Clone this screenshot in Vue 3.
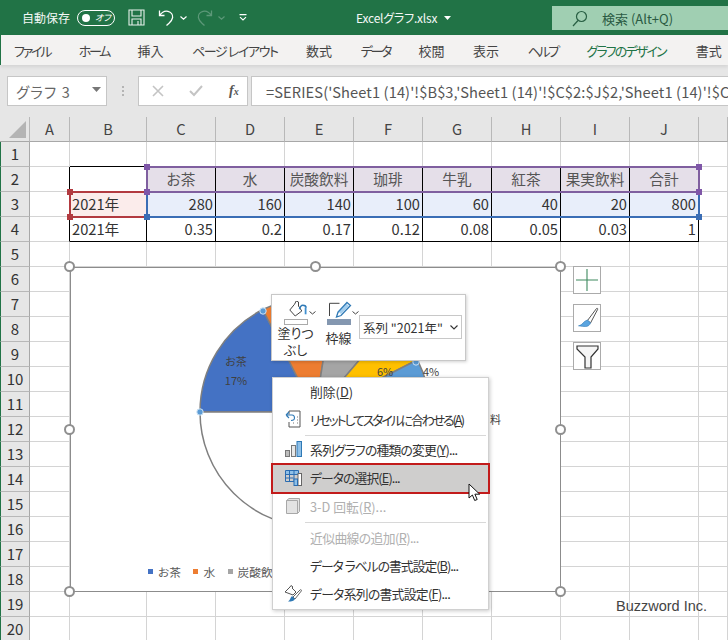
<script setup>
const columns = ['A', 'B', 'C', 'D', 'E', 'F', 'G', 'H', 'I', 'J', '']
const content = {
  2: ['', '', 'お茶', '水', '炭酸飲料', '珈琲', '牛乳', '紅茶', '果実飲料', '合計', ''],
  3: ['', '2021年', '280', '160', '140', '100', '60', '40', '20', '800', ''],
  4: ['', '2021年', '0.35', '0.2', '0.17', '0.12', '0.08', '0.05', '0.03', '1', '']
}
function cellClass(r, c) {
  const inTable = (row, col) => row >= 2 && row <= 4 && col >= 1 && col <= 9
  const list = []
  if (inTable(r, c) || inTable(r, c + 1)) list.push('black-right')
  if (inTable(r, c) || inTable(r + 1, c)) list.push('black-bottom')
  if (r === 2 && c >= 2 && c <= 9) list.push('fill-purple', 'center')
  if (r === 3 && c === 1) list.push('fill-red')
  if (r === 3 && c >= 2 && c <= 9) list.push('fill-blue')
  if ((r === 3 || r === 4) && c >= 2) list.push('right')
  return list
}
const rows = Array.from({ length: 20 }, (_, i) => {
  const r = i + 1
  return {
    r,
    cells: columns.map((_, c) => ({
      key: c,
      text: content[r] ? content[r][c] : '',
      cls: cellClass(r, c)
    }))
  }
})
const tabs = [
  ['ファイル', 'k4'], ['ホーム', 'k2'], ['挿入', ''], ['ページ レイアウト', 'k1'], ['数式', ''],
  ['データ', 'k2'], ['校閲', ''], ['表示', ''], ['ヘルプ', 'k2'], ['グラフのデザイン', 'k3 active'], ['書式', 'last']
]

const cx = 315, cy = 412, rad = 115
const sliceData = [
  [280, '#4472c4'], [160, '#ed7d31'], [140, '#a5a5a5'], [100, '#ffc000'],
  [60, '#5b9bd5'], [40, '#70ad47'], [20, '#264478'], [800, 'none']
]
function pt(deg) {
  const a = (deg * Math.PI) / 180
  return `${(cx - 70 + rad * Math.sin(a)).toFixed(2)} ${(cy - 267 - rad * Math.cos(a)).toFixed(2)}`
}
let start = 270
const slices = sliceData.map(([v, fill]) => {
  const sweep = (v / 800) * 180
  const end = start + sweep
  const d = `M${cx - 70} ${cy - 267} L${pt(start)} A${rad} ${rad} 0 0 1 ${pt(end)} Z`
  start = end
  return { d, fill }
})
const handles = [
  ['0%', '0%'], ['50%', '0%'], ['100%', '0%'], ['0%', '50%'],
  ['100%', '50%'], ['0%', '100%'], ['50%', '100%'], ['100%', '100%']
]
</script>

<template>
  <div class="app">
    <header class="titlebar">
      <span class="autosave">自動保存</span>
      <span class="toggle"><i class="dot"></i><b>オフ</b></span>
      <svg class="qat save" width="17" height="17" viewBox="0 0 17 17" fill="none" stroke="#e8f1ec" stroke-width="1.1">
        <path d="M1 1h15v15H1zM4 1v6h9V1M4 16v-6h9v6M10 12v4" />
      </svg>
      <svg class="qat undo" width="17" height="17" viewBox="0 0 17 17" fill="none" stroke="#fff" stroke-width="1.3">
        <path d="M1.5 1.5v5h5M1.5 6.5C4 3 7 1.5 10 2.3c3 .8 5 3.4 4.6 6.3-.3 2.3-2 4-3.6 5.6L8.5 16.5" />
      </svg>
      <svg class="chev" width="7" height="4" viewBox="0 0 7 4" fill="none" stroke="#fff" stroke-width="1.2"><path d="M.5.5l3 2.6 3-2.6" /></svg>
      <svg class="qat redo" width="17" height="17" viewBox="0 0 17 17" fill="none" stroke="#5c9878" stroke-width="1.3">
        <path d="M15.5 1.5v5h-5M15.5 6.5C13 3 10 1.5 7 2.3c-3 .8-5 3.4-4.6 6.3.3 2.3 2 4 3.6 5.6l2.5 2.3" />
      </svg>
      <svg class="chev dim" width="7" height="4" viewBox="0 0 7 4" fill="none" stroke="#5c9878" stroke-width="1.2"><path d="M.5.5l3 2.6 3-2.6" /></svg>
      <svg class="qatmore" width="8" height="7" viewBox="0 0 8 7" fill="none" stroke="#fff" stroke-width="1.1"><path d="M.5.6h7M1 3.2l3 2.8 3-2.8" /></svg>
      <span class="filename">Excelグラフ.xlsx</span>
      <svg class="filechev" width="7" height="4" viewBox="0 0 7 4" fill="#fff"><path d="M0 0h7L3.5 4z" /></svg>
      <div class="search">
        <svg width="16" height="17" viewBox="0 0 16 17" fill="none" stroke="#285f43" stroke-width="1.2">
          <circle cx="9.5" cy="6.5" r="5" /><path d="M6 10.5L1 16" />
        </svg>
        <span>検索 (Alt+Q)</span>
      </div>
    </header>

    <nav class="tabs">
      <span v-for="t in tabs" :key="t[0]" :class="t[1]">{{ t[0] }}</span>
    </nav>

    <section class="formula">
      <div class="namebox">
        <span>グラフ 3</span>
        <svg width="9" height="5" viewBox="0 0 9 5" fill="#777"><path d="M0 0h9L4.500 5z" /></svg>
      </div>
      <div class="grip"><i></i><i></i><i></i></div>
      <div class="fbuttons">
        <svg width="12" height="12" viewBox="0 0 12 12" stroke="#c4c4c4" stroke-width="1.6"><path d="M1 1l10 10M11 1L1 11" /></svg>
        <svg width="14" height="12" viewBox="0 0 14 12" fill="none" stroke="#c4c4c4" stroke-width="2"><path d="M1 6l4 4 8-9" /></svg>
        <span class="fx">f<small>x</small></span>
      </div>
      <div class="finput">=SERIES('Sheet1 (14)'!$B$3,'Sheet1 (14)'!$C$2:$J$2,'Sheet1 (14)'!$C$3</div>
    </section>

    <section class="sheet">
      <div class="grid">
        <div class="corner"><i></i></div>
        <div v-for="(c, i) in columns" :key="'h' + i" class="colhead">{{ c }}</div>
        <template v-for="row in rows" :key="row.r">
          <div class="rowhead">{{ row.r }}</div>
          <div v-for="cell in row.cells" :key="cell.key" class="cell" :class="cell.cls"><span>{{ cell.text }}</span></div>
        </template>
      </div>

      <div class="grid overlay">
        <div class="range purple"><i class="tl"></i><i class="tr"></i><i class="bl"></i><i class="br"></i></div>
        <div class="range red"><i class="tl"></i><i class="bl"></i></div>
        <div class="range blue"><i class="bl"></i><i class="br"></i></div>

        <div class="chart">
          <svg class="pie" width="490" height="324" viewBox="0 0 490 324">
            <path v-for="(s, i) in slices" :key="i" :d="s.d" :fill="s.fill === 'none' ? '#fff' : s.fill" stroke="#7f7f7f" stroke-width="1.5" />
            <text x="166" y="99" class="lbl" text-anchor="middle">お茶</text>
            <text x="166" y="118" class="lbl" text-anchor="middle">17%</text>
            <text x="315" y="109" class="lbl" text-anchor="middle">6%</text>
            <text x="361" y="109" class="lbl" text-anchor="middle">4%</text>
            <text x="431" y="157" class="lbl" text-anchor="end">料</text>
            <circle cx="193" cy="44" r="3.200" class="pt" />
            <circle cx="130" cy="145" r="3.200" class="pt" />
            <circle cx="346" cy="95" r="3.200" class="pt" />
          </svg>
          <div class="legend">
            <i class="sq sq-blue"></i><span>お茶</span>
            <i class="sq sq-orange"></i><span>水</span>
            <i class="sq sq-gray"></i><span>炭酸飲</span>
          </div>
          <div class="handles">
            <i v-for="(h, i) in handles" :key="i" class="handle" :style="{ left: h[0], top: h[1] }"></i>
          </div>
        </div>
      </div>

      <aside class="sidebtns">
        <button>
          <svg width="22" height="22" viewBox="0 0 22 22" stroke="#3f8a5f" stroke-width="1.1"><path d="M11 0v22M0 11h22" /></svg>
        </button>
        <button>
          <svg width="24" height="24" viewBox="0 0 24 24">
            <path d="M12.500 14.500L21.500 2.500c.5-.7 1.500 0 1.200.8L15.500 17z" fill="#fff" stroke="#555" stroke-width="1" />
            <path d="M12.500 14l3 2.700c-.6 2.400-2.400 3.800-4.800 3.800-2.200 0-4.700-.1-7.200-.7 2-.5 3.400-1.300 4.700-3 1-1.300 2.500-2.200 4.300-2.800z" fill="#5aa5e0" stroke="#2f79b5" stroke-width=".6" />
          </svg>
        </button>
        <button>
          <svg width="23" height="25" viewBox="0 0 23 25">
            <path d="M1 2h21v3l-7 8v11H9V13L1 5z" fill="#f5f5f5" stroke="#333" stroke-width="1.200" stroke-linejoin="miter" />
          </svg>
        </button>
      </aside>

      <div class="mini">
        <div class="mini-col fill">
          <div class="mini-icon">
            <svg width="26" height="17" viewBox="0 0 26 17" fill="none">
              <path d="M6.800 9l4.700-5.700 1.700-3.300 2.300 1v4l3.300 5-6.600 5z" fill="#fff" stroke="#444" stroke-width="1" />
              <path d="M16.500 8.300c.6-2.300 2-4 3.300-4 1.800 0 3.200 1 3.200 2.400" stroke="#2f79b5" stroke-width="1.600" />
              <path d="M22.600 6.500v6.800" stroke="#3f8fd0" stroke-width="1.800" />
            </svg>
            <svg class="mchev" width="7" height="4" viewBox="0 0 7 4" fill="none" stroke="#444" stroke-width="1"><path d="M.5.5l3 2.500 3-2.500" /></svg>
          </div>
          <i class="swatch white"></i>
          <span class="ml1">塗りつ</span>
          <span class="ml2">ぶし</span>
        </div>
        <div class="mini-col line">
          <div class="mini-icon">
            <svg width="26" height="17" viewBox="0 0 26 17" fill="none">
              <path d="M13.500 2.300H3.500V15" stroke="#444" stroke-width="1" />
              <path d="M21 1.500l3.500 3L15 14.500l-4.500 1.500 1.500-4.800z" fill="#fff" stroke="#2f79b5" stroke-width="1.300" />
              <path d="M20.500 2.800l2.600 2.300L15 13l-2.500-2.200z" fill="#5aa5e0" opacity=".55" />
            </svg>
            <svg class="mchev" width="7" height="4" viewBox="0 0 7 4" fill="none" stroke="#444" stroke-width="1"><path d="M.5.5l3 2.500 3-2.500" /></svg>
          </div>
          <i class="swatch steel"></i>
          <span class="ml3">枠線</span>
        </div>
        <div class="mini-select">
          <span>系列 "2021年"</span>
          <svg width="8" height="5" viewBox="0 0 8 5" fill="none" stroke="#333" stroke-width="1.100"><path d="M.5.5l3.500 3.500L7.500.5" /></svg>
        </div>
      </div>

      <div class="menu">
        <div class="mi"><span class="mi-i"></span><span>削除(<u>D</u>)</span></div>
        <div class="mi">
          <span class="mi-i">
            <svg width="16" height="18" viewBox="0 0 16 18" fill="none">
              <path d="M4 4.500V1h11v16H4v-5" stroke="#555" stroke-width="1" />
              <path d="M1 5l3-3M1 5l3 3M1 5h6c2 0 2.500 1.500 2.500 3S8 10.500 6 10.500" stroke="#2f79b5" stroke-width="1.100" />
              <path d="M12 7h1M12 10h1M12 13h1M8 13h1" stroke="#777" stroke-width="1" />
            </svg>
          </span>
          <span class="s-reset">リセットしてスタイルに合わせる(<u>A</u>)</span>
        </div>
        <hr class="sep" />
        <div class="mi">
          <span class="mi-i">
            <svg width="17" height="16" viewBox="0 0 17 16">
              <rect x=".5" y="9.500" width="4" height="6" fill="#bdbdbd" stroke="#777" />
              <rect x="6.500" y="4.500" width="4" height="11" fill="#e8e8e8" stroke="#777" />
              <rect x="12" y=".5" width="4.500" height="15" fill="#8ec0e8" stroke="#2f79b5" />
            </svg>
          </span>
          <span class="s-type">系列グラフの種類の変更(<u>Y</u>)...</span>
        </div>
        <div class="mi hot">
          <span class="mi-i">
            <svg width="17" height="16" viewBox="0 0 17 16" fill="none">
              <rect x="1" y="1" width="12" height="3.500" fill="#8ec0e8" />
              <path d="M.5.500h13v11H.5zM.5 4.500h13M.5 8h8M4.500.5v11M9 .5v11" stroke="#2b6cb0" stroke-width="1" />
              <rect x="13" y="3.500" width="3.500" height="12" fill="#fff" stroke="#666" />
              <rect x="9" y="9" width="3.500" height="6.500" fill="#8ec0e8" stroke="#2b6cb0" />
            </svg>
          </span>
          <span class="s-data">データの選択(<u>E</u>)...</span>
        </div>
        <div class="mi off">
          <span class="mi-i">
            <svg width="14" height="16" viewBox="0 0 14 16">
              <path d="M.5 2.500L3 .5h10.500v13l-2 2H.5z" fill="#e3e3e3" stroke="#a8a8a8" />
              <path d="M.5 2.500h11v13" fill="none" stroke="#a8a8a8" />
            </svg>
          </span>
          <span>3-D 回転(<u>R</u>)...</span>
        </div>
        <hr class="sep wide" />
        <div class="mi off"><span class="mi-i"></span><span class="s-trend">近似曲線の追加(<u>R</u>)...</span></div>
        <div class="mi"><span class="mi-i"></span><span class="s-label">データ ラベルの書式設定(<u>B</u>)...</span></div>
        <div class="mi">
          <span class="mi-i">
            <svg width="18" height="17" viewBox="0 0 18 17" fill="none">
              <path d="M1 7l5-5 1-1.500 2 1.500-1 1 4 4-3 3z" fill="#fff" stroke="#555" stroke-width="1" />
              <path d="M9 12l7-7c1-.8 2 .2 1.300 1L11 14z" fill="#fff" stroke="#555" stroke-width=".9" />
              <path d="M8 11l3 3c-1 2-3 2.500-7 2.500 2-.8 2-3.500 4-5.500z" fill="#2f79b5" />
            </svg>
          </span>
          <span class="s-series">データ系列の書式設定(<u>F</u>)...</span>
        </div>
      </div>

      <svg class="cursor" width="14" height="19" viewBox="0 0 14 19">
        <path d="M1 1v14l3.400-3 2.300 5.500 2.500-1-2.300-5.300h4.800z" fill="#fff" stroke="#111" stroke-width="1" stroke-linejoin="round" />
      </svg>

      <div class="watermark">Buzzword Inc.</div>
    </section>
  </div>
</template>

<style scoped>
.app {
  position: relative;
  width: 728px;
  height: 640px;
  overflow: hidden;
  background: #e6e6e6;
  font-family: "Noto Sans CJK JP", "Noto Sans", sans-serif;
  font-feature-settings: "palt";
  color: #333;
}
.titlebar {
  height: 35px;
  background: #217346;
  color: #fff;
  display: flex;
  align-items: center;
  padding-left: 22px;
  box-sizing: border-box;
}
.autosave { font-size: 12px; width: 49px; white-space: nowrap; color: #f4f8f6; }
.toggle {
  width: 38px;
  height: 16px;
  margin-left: 6px;
  box-sizing: border-box;
  border: 1px solid #fff;
  border-radius: 8px;
  display: flex;
  align-items: center;
  padding-left: 4px;
}
.dot { width: 8px; height: 8px; border-radius: 50%; background: #fff; }
.toggle b { font-weight: 400; font-size: 9px; margin-left: 5px; line-height: 14px; font-style: italic; }
.qat { flex: none; }
.save { margin-left: 13px; }
.undo { margin-left: 13px; }
.chev { margin-left: 5px; flex: none; }
.redo { margin-left: 9px; }
.chev.dim { margin-left: 5px; }
.qatmore { margin-left: 14px; flex: none; }
.filename { margin-left: 109px; font-size: 12px; width: 81px; white-space: nowrap; color: #f4f8f6; letter-spacing: -.2px; }
.filechev { margin-left: 7px; flex: none; }
.search {
  position: absolute;
  left: 552px;
  top: 6px;
  width: 176px;
  height: 24px;
  background: #a0cfb2;
  display: flex;
  align-items: center;
  padding-left: 20px;
  box-sizing: border-box;
  color: #2a5a42;
  font-size: 13px;
}
.search span { margin-left: 14px; white-space: nowrap; }

.tabs {
  height: 30px;
  background: #f3f2f1;
  display: flex;
  align-items: center;
  gap: 28.500px;
  padding-left: 13px;
  font-size: 13px;
  white-space: nowrap;
  color: #444;
  box-shadow: 0 2px 3px rgba(0, 0, 0, .08);
  position: relative;
  border-left: 1px solid #217346;
  box-sizing: border-box;
  overflow: hidden;
}
.tabs .k1 { letter-spacing: -1.400px; }
.tabs .k2 { letter-spacing: -2.300px; }
.tabs .k3 { letter-spacing: -1.850px; }
.tabs .k4 { letter-spacing: -2.200px; }
.tabs .last { margin-left: 1.500px; }
.tabs .active { color: #217346; }

.formula {
  height: 52px;
  background: #e6e6e6;
  display: flex;
  align-items: flex-start;
  padding: 11px 0 0 7px;
  box-sizing: border-box;
}
.namebox, .fbuttons, .finput {
  height: 30px;
  background: #fff;
  border: 1px solid #c6c6c6;
  box-sizing: border-box;
  display: flex;
  align-items: center;
}
.namebox {
  width: 100px;
  padding: 0 5px 0 8px;
  justify-content: space-between;
  font-size: 14.500px;
  color: #666;
  letter-spacing: 1.200px;
}
.namebox svg { margin-top: -4px; }
.grip { width: 31px; height: 30px; display: flex; flex-direction: column; align-items: center; justify-content: center; gap: 2px; }
.grip i { width: 2px; height: 2px; background: #b4b4b4; }
.fbuttons { width: 110px; padding-left: 13px; }
.fbuttons svg:nth-child(2) { margin-left: 25px; }
.fx { margin-left: 26px; font-family: "Liberation Serif", serif; font-style: italic; font-weight: 700; font-size: 14px; color: #555; }
.fx small { font-size: 10px; }
.finput {
  flex: 1;
  margin-left: 3px;
  padding-left: 14px;
  font-size: 14.670px;
  letter-spacing: .1px;
  white-space: nowrap;
  overflow: hidden;
  color: #555;
  font-feature-settings: normal;
  border-right: 0;
}

.sheet { position: relative; height: 523px; background: #fff; }
.grid {
  display: grid;
  grid-template-columns: 30px 40px 77px repeat(8, 69px) 29px;
  grid-template-rows: 25px;
  grid-auto-rows: 25px;
  font-size: 14.670px;
}
.corner, .colhead {
  background: #e6e6e6;
  box-sizing: border-box;
  border-bottom: 1px solid #a8a8a8;
  border-right: 1px solid #b8b8b8;
}
.corner { position: relative; }
.corner i {
  position: absolute;
  right: 3px;
  bottom: 3px;
  width: 0;
  height: 0;
  border-left: 17px solid transparent;
  border-bottom: 17px solid #b4b4b4;
}
.colhead { display: flex; align-items: center; justify-content: center; color: #444; font-size: 14.670px; padding-bottom: 2px; }
.rowhead {
  background: #e6e6e6;
  box-sizing: border-box;
  border-right: 1px solid #a8a8a8;
  border-bottom: 1px solid #b8b8b8;
  border-left: 1px solid #217346;
  display: flex;
  align-items: center;
  justify-content: center;
  font-size: 15px;
  color: #333;
  padding-bottom: 2px;
}
.cell {
  box-sizing: border-box;
  border-right: 1px solid #d4d4d4;
  border-bottom: 1px solid #d4d4d4;
  display: flex;
  align-items: center;
  padding: 0 2px 2px;
  white-space: nowrap;
  overflow: hidden;
  color: #333;
}
.black-right { border-right-color: #000; }
.black-bottom { border-bottom-color: #000; }
.center { justify-content: center; color: #555; }
.right { justify-content: flex-end; }
.fill-purple { background: #e5dfe9; }
.fill-red { background: #fbeceb; }
.fill-blue { background: #e8eefa; }

.overlay { position: absolute; inset: 0; pointer-events: none; }
.range { position: relative; box-sizing: border-box; margin: -1.500px -.5px -.5px -1.500px; }
.range i { position: absolute; width: 6px; height: 6px; }
.range .tl { left: -4px; top: -4px; }
.range .tr { right: -4px; top: -4px; }
.range .bl { left: -4px; bottom: -4px; }
.range .br { right: -4px; bottom: -4px; }
.purple { grid-column: 4 / 12; grid-row: 3; border: 2px solid #7f5f9f; z-index: 2; }
.purple i { background: #7f57a8; }
.red { grid-column: 3 / 4; grid-row: 4; border: 2px solid #b23a40; border-right: 0; z-index: 1; }
.red i { background: #b23a40; }
.blue { grid-column: 4 / 12; grid-row: 4; border: 2px solid #3a6db5; border-top: 0; z-index: 1; }
.blue i { background: #3a6db5; }

.chart {
  grid-column: 3 / 10;
  grid-row: 7 / 20;
  margin: -.5px 0 .5px -.5px;
  position: relative;
  box-sizing: border-box;
  background: #fff;
  border: 1.500px solid #8c8c8c;
}
.pie { position: absolute; left: -1px; top: -1px; }
.lbl { font-size: 11px; fill: #404040; font-family: "Noto Sans CJK JP", sans-serif; }
.pt { fill: #5b9bd5; stroke: #cfe4f5; stroke-width: 1; }
.legend {
  position: absolute;
  left: 77.500px;
  top: 295px;
  display: flex;
  align-items: center;
  font-size: 11.700px;
  color: #595959;
  white-space: nowrap;
}
.sq { width: 5px; height: 5px; margin-right: 5px; }
.sq-blue { background: #4472c4; }
.sq-orange { background: #ed7d31; }
.sq-gray { background: #a5a5a5; }
.legend span { margin-right: 12.500px; }
.handles { position: absolute; inset: -.75px; }
.handle {
  position: absolute;
  width: 11px;
  height: 11px;
  margin: -5.500px 0 0 -5.500px;
  box-sizing: border-box;
  background: #fff;
  border: 2px solid #8f8f8f;
  border-radius: 50%;
}

.sidebtns {
  position: absolute;
  left: 573px;
  top: 149px;
  display: flex;
  flex-direction: column;
  gap: 10px;
}
.sidebtns button {
  width: 28px;
  height: 28px;
  padding: 0;
  background: #fff;
  border: 1.500px solid #ababab;
  display: flex;
  align-items: center;
  justify-content: center;
}

.mini {
  position: absolute;
  left: 271px;
  top: 177px;
  width: 195px;
  height: 67px;
  background: #fff;
  border: 1px solid #c8c8c8;
  box-sizing: border-box;
  box-shadow: 1px 1px 3px rgba(0, 0, 0, .18);
  display: flex;
  font-size: 13px;
  color: #333;
}
.mini-col { display: flex; flex-direction: column; align-items: center; text-align: center; }
.mini-col.fill { width: 47px; }
.mini-col.line { width: 39px; }
.mini-icon { height: 17px; margin-top: 6px; position: relative; width: 30px; }
.mchev { position: absolute; left: 28px; top: 10px; }
.swatch { display: block; height: 6px; width: 24px; margin-top: 1px; box-sizing: border-box; }
.swatch.white { background: #fff; border: 1px solid #aaa; }
.swatch.steel { background: #8497b0; }
.ml1, .ml2, .ml3 { line-height: 17px; height: 17px; }
.ml1 { margin-top: -1px; }
.ml3 { margin-top: 4px; }
.mini-select {
  width: 103px;
  height: 24px;
  margin: 20px 0 0 1px;
  border: 1px solid #c8c8c8;
  box-sizing: border-box;
  display: flex;
  align-items: center;
  justify-content: space-between;
  padding: 0 3px;
  font-size: 12.500px;
  white-space: nowrap;
  font-feature-settings: normal;
}

.menu {
  position: absolute;
  left: 272px;
  top: 260px;
  width: 217px;
  height: 233px;
  background: #fff;
  box-sizing: border-box;
  border: 1px solid #d0d0d0;
  box-shadow: 1px 1px 4px rgba(0, 0, 0, .22);
  font-size: 12.800px;
  color: #333;
}
.mi { height: 28px; display: flex; align-items: center; white-space: nowrap; box-sizing: border-box; padding-bottom: 2px; }
.mi-i { width: 37px; flex: none; display: flex; justify-content: center; padding-left: 3px; box-sizing: border-box; }
.mi u { text-underline-offset: 1px; }
.s-reset { letter-spacing: -2px; }
.s-type { letter-spacing: -.8px; }
.s-data { letter-spacing: -.9px; }
.s-trend { letter-spacing: -.6px; }
.s-label { letter-spacing: -1px; }
.s-series { letter-spacing: -.7px; }
.off { color: #b0b0b0; }
.hot {
  height: 29px;
  background: #cfcecd;
  outline: 2.500px solid #c21b1b;
  outline-offset: -1.500px;
  margin: 0 -1px;
  padding-left: 1px;
  position: relative;
}
.sep { border: 0; border-top: 1px solid #d8d8d8; height: 0; margin: 1px 2px 0 32px; }
.sep.wide { margin-top: 1px; margin-bottom: 1px; }

.cursor { position: absolute; left: 468px; top: 366px; }
.watermark {
  position: absolute;
  left: 616px;
  top: 481px;
  font-family: "Liberation Sans", sans-serif;
  font-size: 14.500px;
  color: #444;
  white-space: nowrap;
  text-shadow: 0 0 2px #fff, 0 0 2px #fff;
}
</style>
